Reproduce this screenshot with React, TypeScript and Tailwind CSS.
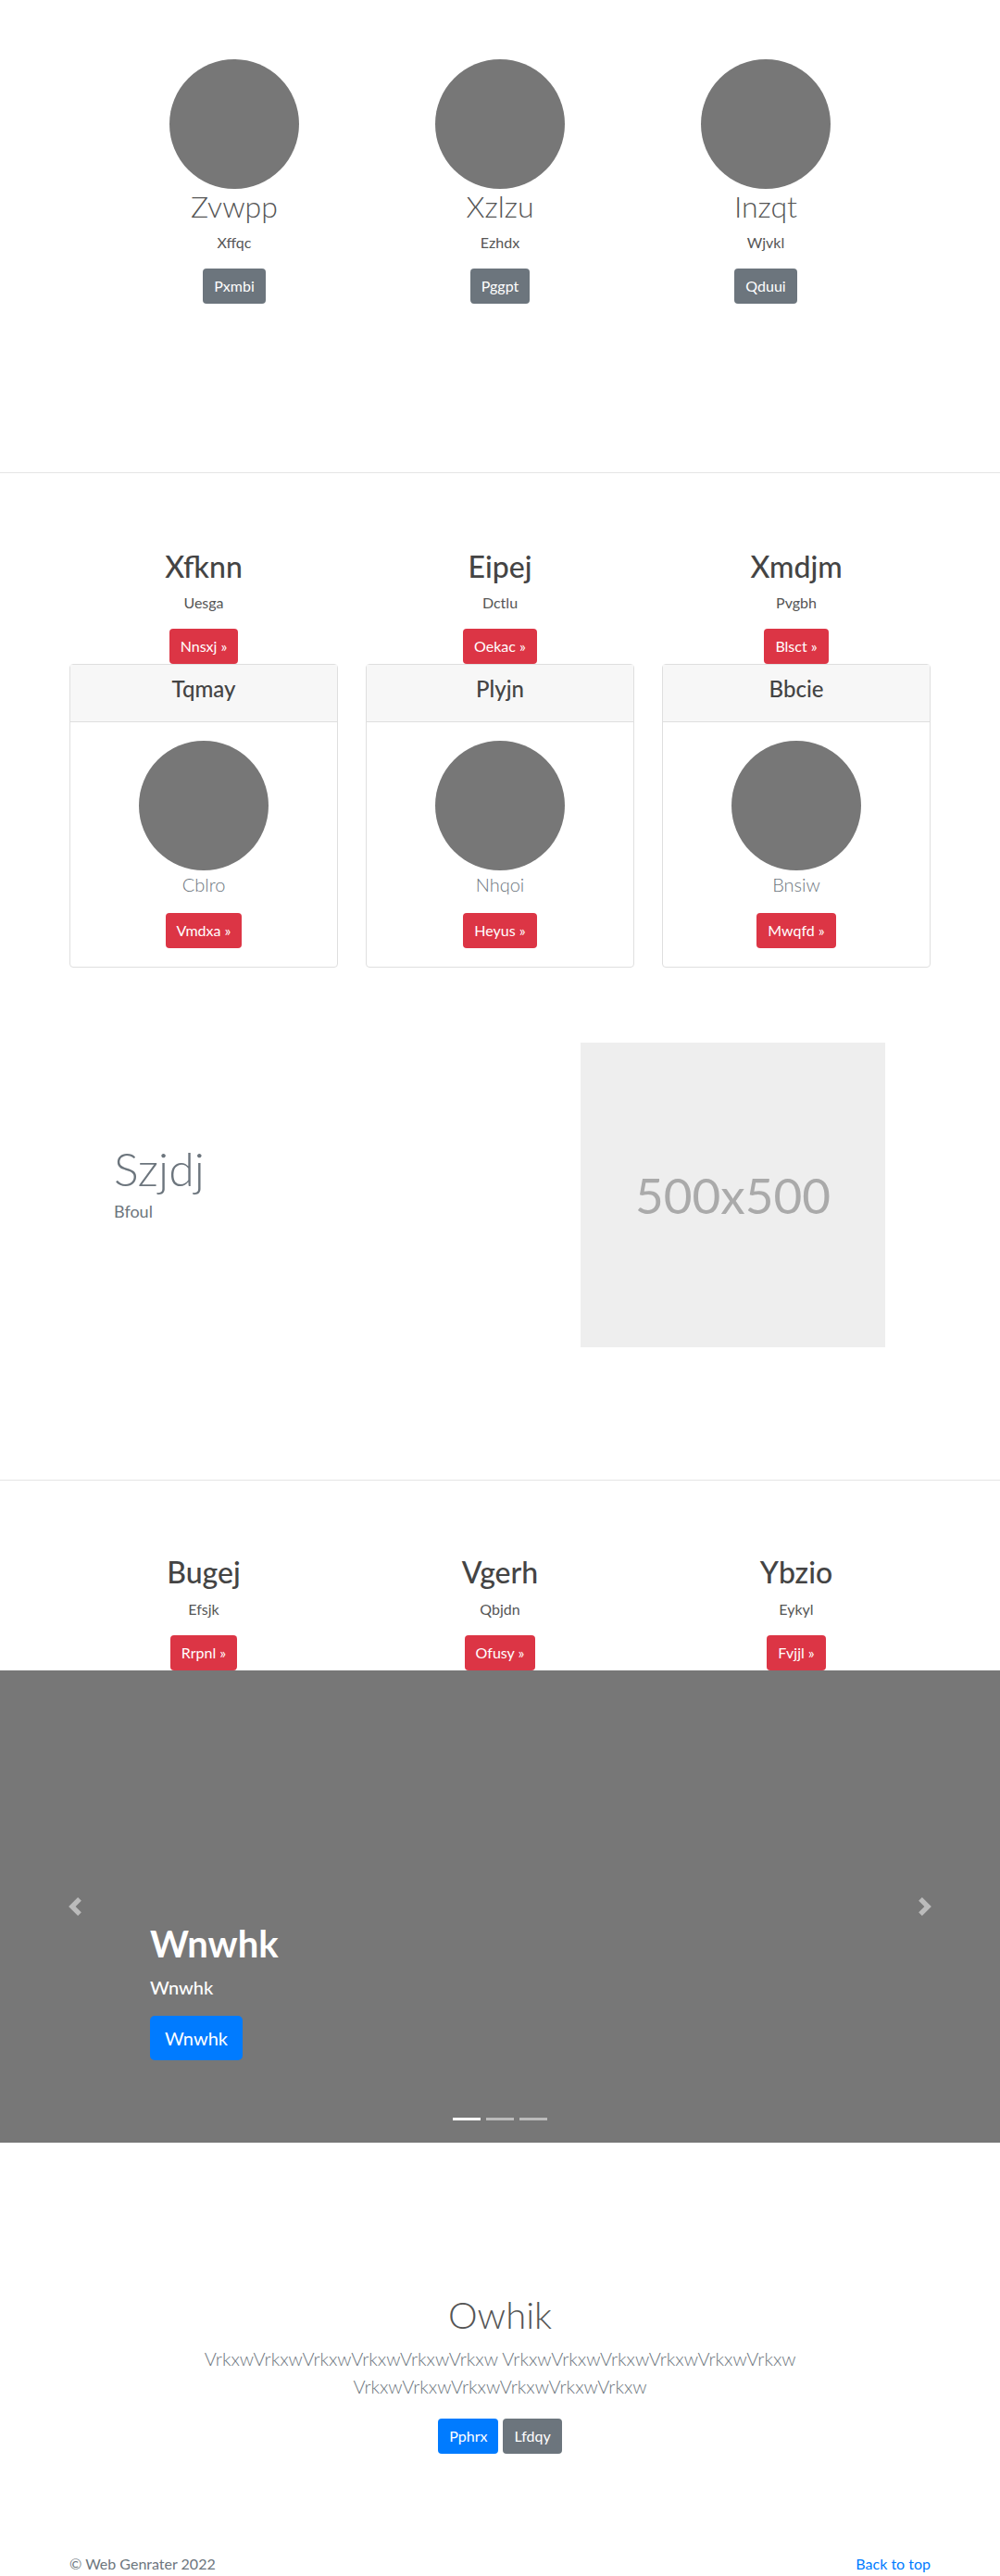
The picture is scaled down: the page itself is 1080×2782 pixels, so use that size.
import React from 'react';

const TOP = [
  { title: 'Zvwpp', sub: 'Xffqc', btn: 'Pxmbi' },
  { title: 'Xzlzu', sub: 'Ezhdx', btn: 'Pggpt' },
  { title: 'Inzqt', sub: 'Wjvkl', btn: 'Qduui' },
];

const CARDS = [
  { title: 'Xfknn', sub: 'Uesga', btn: 'Nnsxj', head: 'Tqmay', text: 'Cblro', action: 'Vmdxa' },
  { title: 'Eipej', sub: 'Dctlu', btn: 'Oekac', head: 'Plyjn', text: 'Nhqoi', action: 'Heyus' },
  { title: 'Xmdjm', sub: 'Pvgbh', btn: 'Blsct', head: 'Bbcie', text: 'Bnsiw', action: 'Mwqfd' },
];

const MORE = [
  { title: 'Bugej', sub: 'Efsjk', btn: 'Rrpnl' },
  { title: 'Vgerh', sub: 'Qbjdn', btn: 'Ofusy' },
  { title: 'Ybzio', sub: 'Eykyl', btn: 'Fvjjl' },
];

const btn = 'inline-block rounded text-white text-base leading-6 px-3 py-[7px]';

const Chevron = ({ dir }: { dir: 'left' | 'right' }) => (
  <svg width="20" height="20" viewBox="0 0 8 8" fill="#fff">
    {dir === 'left' ? (
      <path d="M5.25 0l-4 4 4 4 1.5-1.5-2.5-2.5 2.5-2.5-1.5-1.5z" />
    ) : (
      <path d="M2.75 0l-1.5 1.5 2.5 2.5-2.5 2.5 1.5 1.5 4-4-4-4z" />
    )}
  </svg>
);

const HeadBlock = ({ title, sub, btnText }: { title: string; sub: string; btnText: string }) => (
  <div className="flex flex-col items-center">
    <h2 className="text-[32px] leading-[1.2] font-medium text-[#444] mb-2">{title}</h2>
    <p className="text-base leading-6 text-[#555] mb-4">{sub}</p>
    <a className={`${btn} bg-[#dc3545]`}>{btnText} »</a>
  </div>
);

export default function App() {
  const text = 'VrkxwVrkxwVrkxwVrkxwVrkxwVrkxw';
  return (
    <div className="w-[1080px] bg-white font-[family-name:Lato,'Open_Sans',sans-serif] text-[#555]">
      {/* avatars */}
      <section className="h-[510px] pt-[64px]">
        <div className="w-[861px] mx-auto grid grid-cols-3">
          {TOP.map((t) => (
            <div key={t.title} className="flex flex-col items-center">
              <div className="w-[140px] h-[140px] rounded-full bg-[#777]" />
              <h2 className="text-[32px] leading-[1.2] font-light text-[#555] mb-2">{t.title}</h2>
              <p className="text-base leading-6 text-[#555] mb-4">{t.sub}</p>
              <a className={`${btn} bg-[#6c757d]`}>{t.btn}</a>
            </div>
          ))}
        </div>
      </section>
      <div className="h-px bg-[#e5e5e5]" />

      {/* cards */}
      <section className="pt-[82px]">
        <div className="w-[960px] mx-auto px-[15px] grid grid-cols-3 gap-[30px]">
          {CARDS.map((c) => (
            <div key={c.title} className="flex flex-col">
              <HeadBlock title={c.title} sub={c.sub} btnText={c.btn} />
              <div className="border border-[#dfdfdf] rounded flex flex-col">
                <div className="bg-[#f7f7f7] border-b border-[#dfdfdf] pt-3 pb-3 text-center">
                  <h4 className="text-2xl leading-[1.2] font-medium text-[#444] mb-2">{c.head}</h4>
                </div>
                <div className="p-5 flex flex-col items-center">
                  <div className="w-[140px] h-[140px] rounded-full bg-[#777]" />
                  <p className="text-xl leading-[1.5] font-light text-[#6c757d] mb-4">{c.text}</p>
                  <a className={`${btn} bg-[#dc3545]`}>{c.action} »</a>
                </div>
              </div>
            </div>
          ))}
        </div>
      </section>

      {/* feature */}
      <section className="pt-[81px] pb-[143px] flex">
        <div className="w-[540px] pl-[123px] pt-[106px]">
          <h1 className="text-[50px] leading-[1.2] font-light text-[#6c757d] mb-1">Szjdj</h1>
          <p className="text-lg leading-6 text-[#6c757d]">Bfoul</p>
        </div>
        <div className="pl-[87px]">
          <div className="w-[329px] h-[329px] bg-[#eee] flex items-center justify-center">
            <span className="text-[53px] text-[#aaa] leading-none">500x500</span>
          </div>
        </div>
      </section>
      <div className="h-px bg-[#e5e5e5]" />

      {/* more columns */}
      <section className="pt-[80px]">
        <div className="w-[960px] mx-auto px-[15px] grid grid-cols-3 gap-[30px]">
          {MORE.map((m) => (
            <HeadBlock key={m.title} title={m.title} sub={m.sub} btnText={m.btn} />
          ))}
        </div>
      </section>

      {/* carousel */}
      <section className="relative h-[510px] bg-[#777]">
        <div className="absolute left-0 top-0 bottom-0 w-[15%] flex items-center justify-center opacity-50">
          <Chevron dir="left" />
        </div>
        <div className="absolute right-0 top-0 bottom-0 w-[15%] flex items-center justify-center opacity-50">
          <Chevron dir="right" />
        </div>
        <div className="absolute left-[15%] right-[15%] top-[271px] text-white">
          <h1 className="text-[40px] leading-[1.2] font-bold mb-2">Wnwhk</h1>
          <p className="text-xl leading-[1.5] font-medium mb-4">Wnwhk</p>
          <a className="inline-block bg-[#007bff] text-white text-xl leading-[1.5] px-4 py-[9px] rounded-[5px]">Wnwhk</a>
        </div>
        <div className="absolute bottom-[24px] left-0 right-0 flex justify-center gap-[6px]">
          <span className="w-[30px] h-[3px] bg-white" />
          <span className="w-[30px] h-[3px] bg-white/50" />
          <span className="w-[30px] h-[3px] bg-white/50" />
        </div>
      </section>

      {/* jumbotron */}
      <section className="pt-[162px] text-center">
        <h1 className="text-[40px] leading-[1.2] font-light text-[#555] mb-2">Owhik</h1>
        <p className="max-w-[700px] mx-auto text-xl leading-[1.5] font-light text-[#6c757d] mb-4">
          {text} {text} {text}
        </p>
        <div className="flex justify-center gap-[5px] mt-[20px]">
          <a className={`${btn} bg-[#007bff]`}>Pphrx</a>
          <a className={`${btn} bg-[#6c757d]`}>Lfdqy</a>
        </div>
      </section>

      <footer className="w-[960px] mx-auto px-[15px] pt-[107px] pb-12 flex justify-between text-base leading-6">
        <span className="text-[#6c757d]">© Web Genrater 2022</span>
        <a className="text-[#007bff]">Back to top</a>
      </footer>
    </div>
  );
}
